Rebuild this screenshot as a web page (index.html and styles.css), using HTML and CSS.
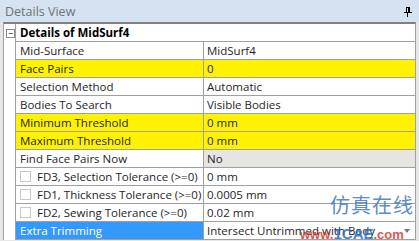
FILE: index.html
```html
<!DOCTYPE html>
<html lang="en">
<head>
  <meta charset="UTF-8">
  <title>Details View</title>
  <link rel="stylesheet" href="styles.css">
</head>
<body>
  <div class="panel">
    <div class="titlebar">
      <span class="title">Details View</span>
      <svg class="pin" width="8" height="10" viewBox="0 0 8 10">
        <rect x="2" y="0" width="4" height="1" fill="#000"/>
        <rect x="2" y="1" width="1" height="5" fill="#000"/>
        <rect x="4" y="1" width="2" height="5" fill="#000"/>
        <rect x="0" y="5" width="8" height="1" fill="#000"/>
        <rect x="3" y="6" width="1" height="4" fill="#000"/>
      </svg>
    </div>
    <div class="grid">
      <div class="row">
        <div class="gutter"><span class="toggle">&minus;</span></div>
        <div class="cell group">Details of MidSurf4</div>
      </div>
      <div class="row">
        <div class="gutter"></div>
        <div class="cell label">Mid-Surface</div>
        <div class="cell value">MidSurf4</div>
      </div>
      <div class="row">
        <div class="gutter"></div>
        <div class="cell label yellow">Face Pairs</div>
        <div class="cell value yellow">0</div>
      </div>
      <div class="row">
        <div class="gutter"></div>
        <div class="cell label">Selection Method</div>
        <div class="cell value">Automatic</div>
      </div>
      <div class="row">
        <div class="gutter"></div>
        <div class="cell label">Bodies To Search</div>
        <div class="cell value">Visible Bodies</div>
      </div>
      <div class="row">
        <div class="gutter"></div>
        <div class="cell label yellow">Minimum Threshold</div>
        <div class="cell value yellow">0 mm</div>
      </div>
      <div class="row">
        <div class="gutter"></div>
        <div class="cell label yellow">Maximum Threshold</div>
        <div class="cell value yellow">0 mm</div>
      </div>
      <div class="row">
        <div class="gutter"></div>
        <div class="cell label">Find Face Pairs Now</div>
        <div class="cell value readonly">No</div>
      </div>
      <div class="row">
        <div class="gutter"></div>
        <div class="cell label"><span class="check"></span>FD3, Selection Tolerance (&gt;=0)</div>
        <div class="cell value">0 mm</div>
      </div>
      <div class="row">
        <div class="gutter"></div>
        <div class="cell label"><span class="check"></span>FD1, Thickness Tolerance (&gt;=0)</div>
        <div class="cell value">0.0005 mm</div>
      </div>
      <div class="row">
        <div class="gutter"></div>
        <div class="cell label"><span class="check"></span>FD2, Sewing Tolerance (&gt;=0)</div>
        <div class="cell value">0.02 mm</div>
      </div>
      <div class="row">
        <div class="gutter"></div>
        <div class="cell label selected">Extra Trimming</div>
        <div class="cell value dropdown">Intersect Untrimmed with Body<span class="arrow"></span></div>
      </div>
    </div>
    <div class="mark-cn">仿真在线</div>
    <div class="mark-url"><span class="red">www.</span><span class="blue">1CAE</span><span class="red">.com</span></div>
  </div>
</body>
</html>
```

FILE: styles.css
```css
body {
  margin: 0;
  font-family: "Open Sans", sans-serif;
  font-size: 11.5px;
  color: #1e1e2a;
}

.panel {
  width: 419px;
  height: 241px;
  background-color: #e6e6e6;
  position: relative;
  overflow: hidden;
}

.titlebar {
  height: 22px;
  background-color: #d5e2f1;
  display: flex;
  align-items: center;
  justify-content: space-between;
  padding: 0 5px 0 5px;
  box-sizing: border-box;
}

.title {
  font-size: 12.5px;
  color: #6e7378;
}

.pin {
  margin-top: 2px;
  margin-right: 2px;
}

.grid {
  margin: 0 3px 0 3px;
  border-top: 2px solid #808080;
  border-left: 1px solid #a0a0a0;
  border-right: 1px solid #a0a0a0;
  background-color: #fff;
}

.row {
  display: flex;
  height: 18px;
}

.gutter {
  width: 11px;
  display: flex;
  align-items: center;
  justify-content: center;
}

.toggle {
  width: 7px;
  height: 7px;
  border: 1px solid #8a8a8a;
  font-size: 9px;
  line-height: 7px;
  text-align: center;
  color: #000;
  margin-left: 2px;
}

.cell {
  border-left: 1px solid #a0a0a0;
  border-bottom: 1px solid #a0a0a0;
  display: flex;
  align-items: center;
  white-space: nowrap;
  overflow: hidden;
}

.group {
  flex: 1;
  padding-left: 4px;
  font-weight: bold;
  color: #000;
}

.label {
  width: 183px;
  padding-left: 4px;
}

.value {
  flex: 1;
  padding-left: 3px;
}

.yellow {
  background-color: #fff200;
}

.readonly {
  background-color: #e7e5e2;
}

.selected {
  background-color: #3399ff;
  color: #fff;
}

.check {
  width: 9px;
  height: 9px;
  border: 1px solid #c8c8c8;
  background-color: #fff;
  margin-right: 6px;
}

.dropdown {
  position: relative;
}

.arrow {
  position: absolute;
  right: 5px;
  top: 7px;
  border-left: 3px solid transparent;
  border-right: 3px solid transparent;
  border-top: 4px solid #777;
}

.mark-cn {
  position: absolute;
  left: 330px;
  top: 190px;
  white-space: nowrap;
  font-family: "Noto Sans CJK SC", sans-serif;
  font-size: 20px;
  line-height: 30px;
  letter-spacing: 1px;
  color: #4a80c8;
  opacity: 0.9;
}

.mark-url {
  position: absolute;
  left: 300px;
  top: 226px;
  white-space: nowrap;
  font-family: "Liberation Sans", Arial, sans-serif;
  font-size: 13px;
  line-height: 15px;
  font-weight: bold;
  opacity: 0.85;
}

.red {
  color: #d93a2b;
}

.blue {
  color: #2a6fc4;
  font-size: 15px;
}
```
